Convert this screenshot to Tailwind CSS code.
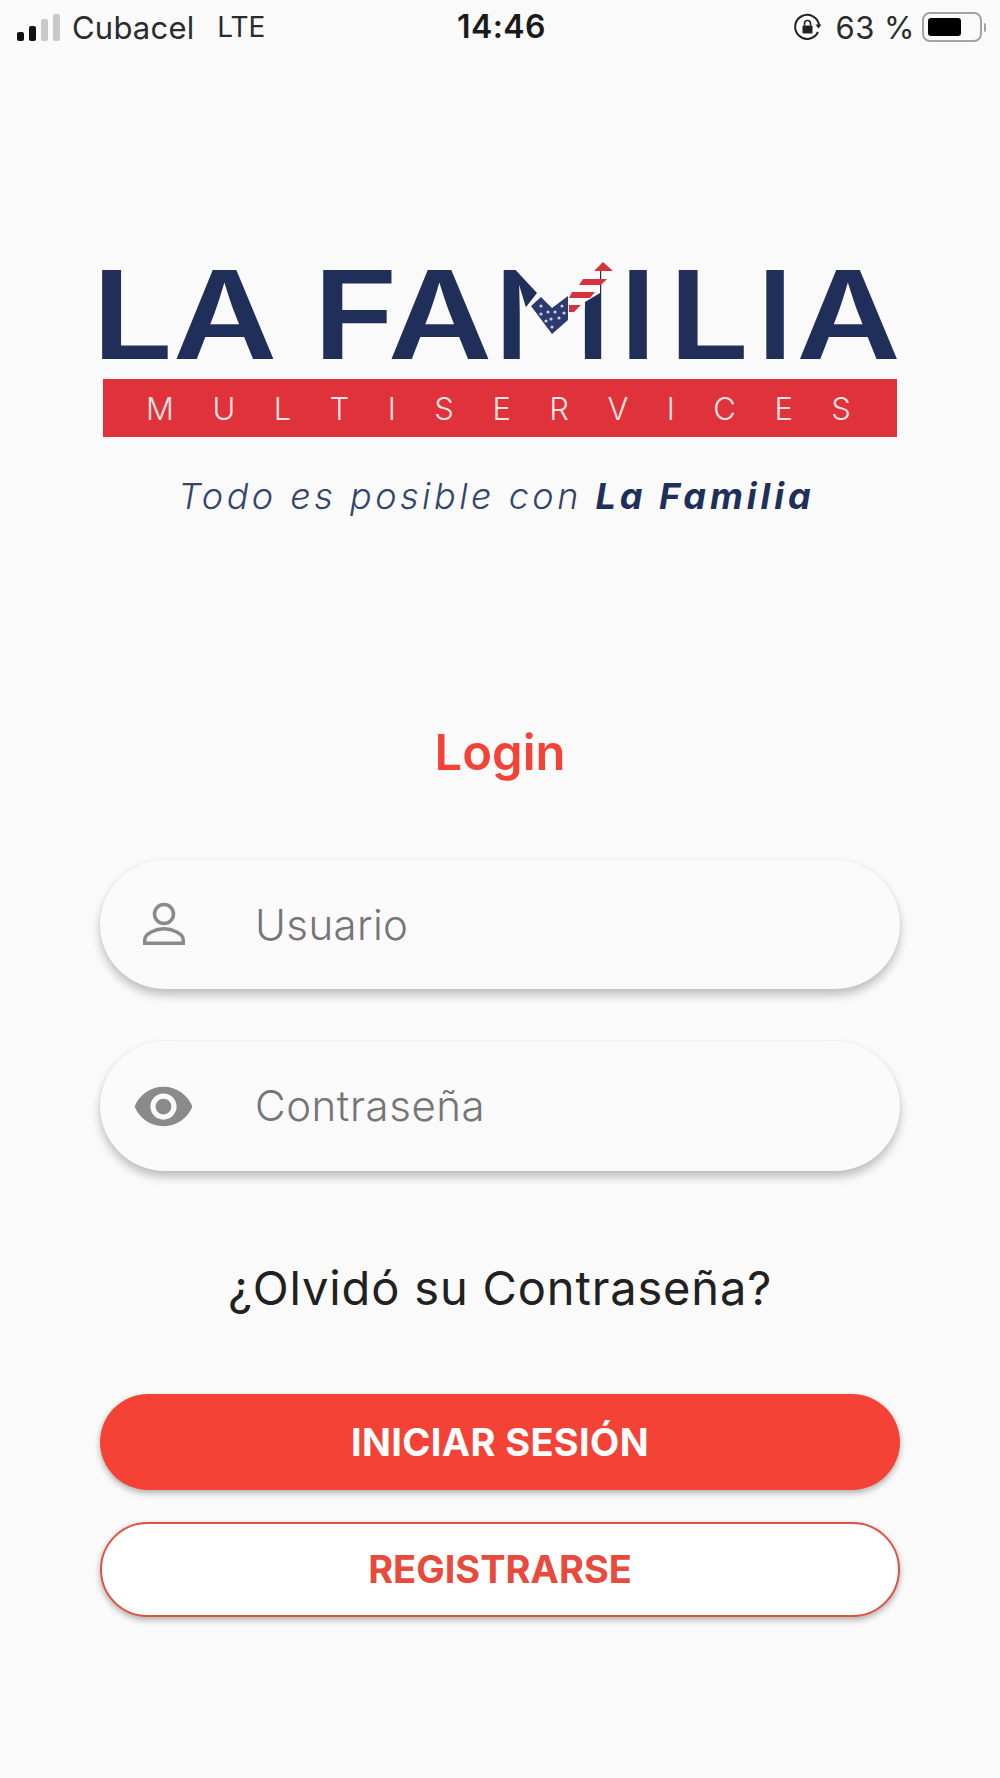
<!DOCTYPE html>
<html lang="es">
<head>
    <meta charset="UTF-8">
    <meta name="viewport" content="width=device-width, initial-scale=1.0">
    <title>La Familia Multiservices - Login</title>
    <script src="https://cdn.jsdelivr.net/npm/@tailwindcss/browser@4"></script>
</head>
<body class="bg-[#fafafa] font-['Inter',sans-serif]">
    <div class="w-[1000px] h-[1778px] overflow-hidden">
        <!-- status bar -->
        <div class="grid grid-cols-3 items-center h-[54px] pl-[17px] pr-[14px] text-[#2b2b2b]">
            <div class="flex items-center">
                <div class="flex items-end gap-[5px] h-[28px] pb-[1px] mt-[2px]">
                    <div class="w-[7px] h-[9px] rounded-[2px] bg-[#111]"></div>
                    <div class="w-[7px] h-[15px] rounded-[2px] bg-[#111]"></div>
                    <div class="w-[7px] h-[22px] rounded-[2px] bg-[#c9c9c9]"></div>
                    <div class="w-[7px] h-[27px] rounded-[2px] bg-[#c9c9c9]"></div>
                </div>
                <span class="ml-[12px] text-[31px] leading-none tracking-[0.2px]">Cubacel</span>
                <span class="ml-[23px] text-[28px] leading-none">LTE</span>
            </div>
            <div class="text-center text-[32px] leading-none font-semibold tracking-[0.4px] text-[#1a1a1a]">14:46</div>
            <div class="flex items-center justify-end">
                <svg width="30" height="30" viewBox="0 0 30 30" fill="none">
                    <path d="M25 20a12 12 0 1 1 1-7" stroke="#222" stroke-width="2"/>
                    <path d="M22.5 12.5l6 0-3 4z" fill="#222"/>
                    <rect x="9.5" y="13.5" width="10" height="8" rx="1" fill="#222"/>
                    <path d="M11.5 13.5v-2a3 3 0 0 1 6 0v2" stroke="#222" stroke-width="1.6"/>
                </svg>
                <span class="ml-[12px] text-[31px] leading-none tracking-[0.5px]">63 %</span>
                <div class="ml-[7px] flex items-center">
                    <div class="w-[60px] h-[30px] p-[4px] rounded-[8px] border-2 border-[#a3a3a3]">
                        <div class="w-[33px] h-full rounded-[3px] bg-black"></div>
                    </div>
                    <div class="ml-[2px] w-[2px] h-[9px] rounded-r-full bg-[#a3a3a3]"></div>
                </div>
            </div>
        </div>

        <!-- logo -->
        <svg class="block mt-[206px] overflow-visible" width="1000" height="101" viewBox="0 260 1000 101" font-size="122" font-weight="600" fill="#1f2f5a" text-anchor="middle">
            <text transform="translate(132.500 359) scale(1.19 1)">L</text>
            <text transform="translate(225 359) scale(1.17 1)">A</text>
            <text transform="translate(355.500 359) scale(1.2 1)">F</text>
            <text transform="translate(440 359) scale(1.17 1)">A</text>
            <text transform="translate(552.500 359) scale(1.03 1)">M</text>
            <text transform="translate(638 359) scale(1.1 1)">I</text>
            <text transform="translate(709 359) scale(1.18 1)">L</text>
            <text transform="translate(775 359) scale(1.1 1)">I</text>
            <text transform="translate(848.500 359) scale(1.17 1)">A</text>
            <!-- check mark with the flag, cuts into the M -->
            <polygon points="510,264 537,293 526,307 525.500,361 580,361 580,305 600,293 600,258 560,258" fill="#fafafa"/>
            <polygon points="531,306 541,297 552,308 568,296 568,320 552,334" fill="#2e3a6e"/>
            <g fill="#c9cde0">
                <circle cx="541" cy="306" r="1.600"/><circle cx="548" cy="312" r="1.600"/><circle cx="555" cy="312" r="1.600"/>
                <circle cx="562" cy="306" r="1.600"/><circle cx="541" cy="314" r="1.600"/><circle cx="551" cy="319" r="1.600"/>
                <circle cx="559" cy="318" r="1.600"/><circle cx="564" cy="313" r="1.600"/><circle cx="552" cy="327" r="1.600"/>
                <circle cx="546" cy="321" r="1.600"/>
            </g>
            <g fill="#d5333f">
                <polygon points="569,305 581,305 574,312 569,312"/>
                <polygon points="572,292 595,292 590,298 569,298"/>
                <polygon points="583,279 607,279 601,285 579,285"/>
                <polygon points="603,262 613,271 594,271"/>
            </g>
        </svg>
        <div class="flex justify-between items-center mt-[18px] ml-[103px] w-[794px] h-[58px] pl-[43px] pr-[46px] bg-[#e0323a] text-[#fbe3e3] text-[31px] font-light leading-none">
            <span>M</span><span>U</span><span>L</span><span>T</span><span>I</span><span>S</span><span>E</span><span>R</span><span>V</span><span>I</span><span>C</span><span>E</span><span>S</span>
        </div>
        <p class="mt-[37px] pr-[7px] text-center text-[36px] leading-[44px] italic font-light tracking-[3.5px] text-[#34456b]">Todo es posible con <span class="font-bold tracking-[4px] text-[#1f2f5a]">La Familia</span></p>

        <!-- form -->
        <h1 class="mt-[208px] text-center text-[49px] leading-[54px] font-semibold text-[#f44336]">Login</h1>
        <div class="mx-[100px] mt-[80px]">
            <div class="flex items-center h-[129px] rounded-full bg-[#fafafa] shadow-[0_6px_10px_rgba(0,0,0,0.24),0_0_3px_rgba(0,0,0,0.05)]">
                <div class="flex justify-center w-[128px]">
                    <svg width="48" height="48" viewBox="0 0 48 48" fill="none" stroke="#8a8a8a" stroke-width="3.500"><circle cx="24" cy="13" r="9.500"/><path d="M4.750 42.250v-3.500c0-6 11-11 19.250-11s19.250 5 19.250 11v3.500z"/></svg>
                </div>
                <span class="ml-[27px] text-[42px] leading-none font-[350] tracking-[0.4px] text-[#757575]">Usuario</span>
            </div>
            <div class="flex items-center h-[130px] mt-[52px] rounded-full bg-[#fafafa] shadow-[0_6px_10px_rgba(0,0,0,0.24),0_0_3px_rgba(0,0,0,0.05)]">
                <div class="flex justify-center w-[126px]">
                    <svg width="63" height="63" viewBox="0 0 24 24" fill="#8a8a8a"><path d="M12 4.500C7 4.500 2.730 7.610 1 12c1.730 4.390 6 7.500 11 7.500s9.270-3.110 11-7.500c-1.730-4.390-6-7.500-11-7.500zM12 17c-2.760 0-5-2.240-5-5s2.240-5 5-5 5 2.240 5 5-2.240 5-5 5zm0-8c-1.660 0-3 1.340-3 3s1.340 3 3 3 3-1.340 3-3-1.340-3-3-3z"/></svg>
                </div>
                <span class="ml-[29px] text-[42px] leading-none font-[350] tracking-[0.55px] text-[#757575]">Contraseña</span>
            </div>
            <p class="mt-[89px] text-center text-[47px] leading-[56px] tracking-[0.85px] text-[#212121]">¿Olvidó su Contraseña?</p>
            <button class="block w-full h-[96px] mt-[78px] rounded-full bg-[#f44336] text-white text-[38px] font-bold tracking-[0.35px] shadow-[0_3px_6px_rgba(0,0,0,0.3)]">INICIAR SESIÓN</button>
            <button class="block w-full h-[95px] mt-[32px] rounded-full bg-white border-2 border-[#e0533f] text-[#e84a3c] text-[38px] font-bold shadow-[0_3px_6px_rgba(0,0,0,0.3)]">REGISTRARSE</button>
        </div>
    </div>
</body>
</html>
